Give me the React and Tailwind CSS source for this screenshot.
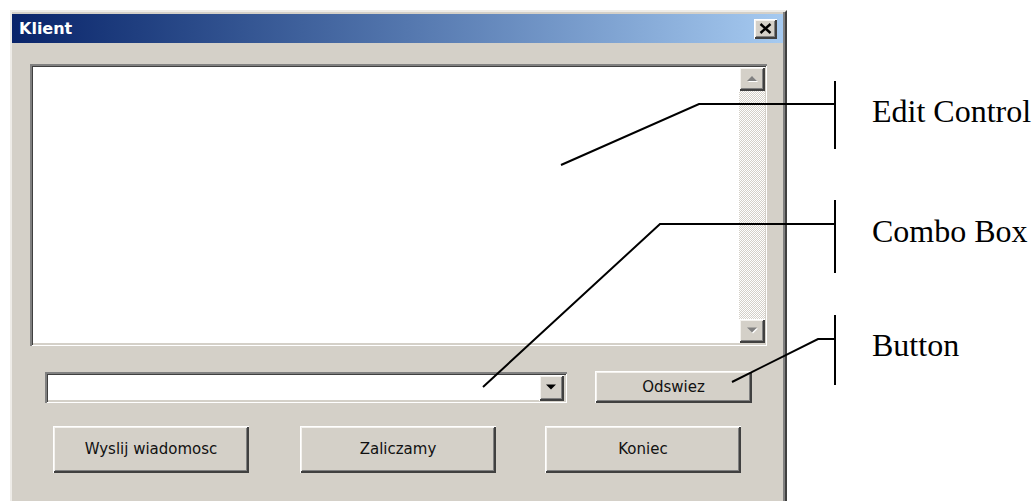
import React from 'react';

const raised =
  'bg-[#d4d0c8] shadow-[inset_1px_1px_0_#fff,inset_-2px_-2px_0_#404040,inset_2px_2px_0_#f4f2ee,inset_-3px_-3px_0_#808080]';
const sunken =
  'bg-white shadow-[inset_2px_2px_0_#808080,inset_-1px_-1px_0_#fff,inset_3px_3px_0_#404040,inset_-3px_-3px_0_#d4d0c8]';

const Arrow = ({ up, disabled }) => (
  <svg width="13" height="8" viewBox="0 0 13 8">
    {disabled && (
      <polygon points={up ? '2,7 7,2 12,7' : '2,1.5 12,1.5 7,6.5'} fill="#fff" />
    )}
    <polygon
      points={up ? '1,6 6,1 11,6' : '1,0.5 11,0.5 6,5.5'}
      fill={disabled ? '#808080' : '#000'}
    />
  </svg>
);

const WinButton = ({ label, className }) => (
  <button
    type="button"
    className={`${raised} ${className} flex items-center justify-center text-[15px] text-[#111]`}
  >
    {label}
  </button>
);

// callout leaders drawn on top of the dialog
const Callouts = () => (
  <svg
    className="absolute left-0 top-0 pointer-events-none"
    width="1032"
    height="501"
    fill="none"
    stroke="#000"
    strokeWidth="2"
  >
    <polyline points="561,165 699,104 835,104" />
    <line x1="835" y1="81" x2="835" y2="149" />
    <polyline points="483,387 660,224 835,224" />
    <line x1="835" y1="200" x2="835" y2="273" />
    <polyline points="732,382 818,339 835,339" />
    <line x1="835" y1="315" x2="835" y2="385" />
  </svg>
);

const labels = [
  { text: 'Edit Control', pos: 'top-[95px]' },
  { text: 'Combo Box', pos: 'top-[215px]' },
  { text: 'Button', pos: 'top-[329px]' },
];

export default function App() {
  return (
    <div
      className="relative w-[1032px] h-[501px] overflow-hidden bg-white"
      style={{ fontFamily: '"DejaVu Sans", Tahoma, sans-serif' }}
    >
      <div className="ml-[10px] mt-[10px] w-[777px] h-[491px] bg-[#d4d0c8] border-l-2 border-t-2 border-r-2 border-l-[#eeece8] border-t-[#eeece8] border-r-[#404040] pt-[2px] pr-[2px] shadow-[inset_-2px_0_0_#808080] flex flex-col">
        {/* title bar */}
        <div className="h-[29px] bg-gradient-to-r from-[#0a246a] to-[#a6caf0] flex items-center justify-between pl-[7px] pr-[6px]">
          <span className="text-white font-bold text-[16px] leading-none">Klient</span>
          <div className={`${raised} w-[23px] h-[20px] flex items-center justify-center`}>
            <svg width="13" height="11" viewBox="0 0 13 11" stroke="#000" strokeWidth="2.4">
              <line x1="1.5" y1="1" x2="11.5" y2="10" />
              <line x1="11.5" y1="1" x2="1.5" y2="10" />
            </svg>
          </div>
        </div>

        {/* edit control with vertical scrollbar */}
        <div className={`${sunken} ml-[18px] mt-[21px] w-[737px] h-[282px] pt-[3px] pl-[3px] pb-[3px] pr-[2px] flex justify-end`}>
          <div className="w-[26px] flex flex-col bg-[repeating-conic-gradient(#d4d0c8_0_25%,#fff_0_50%)] bg-[length:2px_2px]">
            <div className={`${raised} h-[24px] flex items-center justify-center`}>
              <Arrow up disabled />
            </div>
            <div className="flex-1" />
            <div className={`${raised} h-[24px] flex items-center justify-center`}>
              <Arrow disabled />
            </div>
          </div>
        </div>

        {/* combo box + refresh */}
        <div className="flex items-start mt-[25px] ml-[33px]">
          <div className={`${sunken} mt-[1px] w-[522px] h-[31px] pt-[3px] pl-[3px] pb-[2px] pr-[3px] flex justify-end`}>
            <div className={`${raised} w-[25px] h-[26px] flex items-center justify-center`}>
              <Arrow />
            </div>
          </div>
          <WinButton label="Odswiez" className="ml-[28px] w-[157px] h-[32px]" />
        </div>

        {/* bottom actions */}
        <div className="flex mt-[23px] ml-[41px]">
          <WinButton label="Wyslij wiadomosc" className="w-[196px] h-[47px]" />
          <WinButton label="Zaliczamy" className="ml-[51px] w-[196px] h-[47px]" />
          <WinButton label="Koniec" className="ml-[49px] w-[196px] h-[47px]" />
        </div>
      </div>

      <Callouts />

      {labels.map((l) => (
        <span
          key={l.text}
          className={`absolute left-[872px] ${l.pos} text-[32px] leading-[32px] text-black whitespace-nowrap`}
          style={{ fontFamily: '"Liberation Serif", "Times New Roman", serif' }}
        >
          {l.text}
        </span>
      ))}
    </div>
  );
}
